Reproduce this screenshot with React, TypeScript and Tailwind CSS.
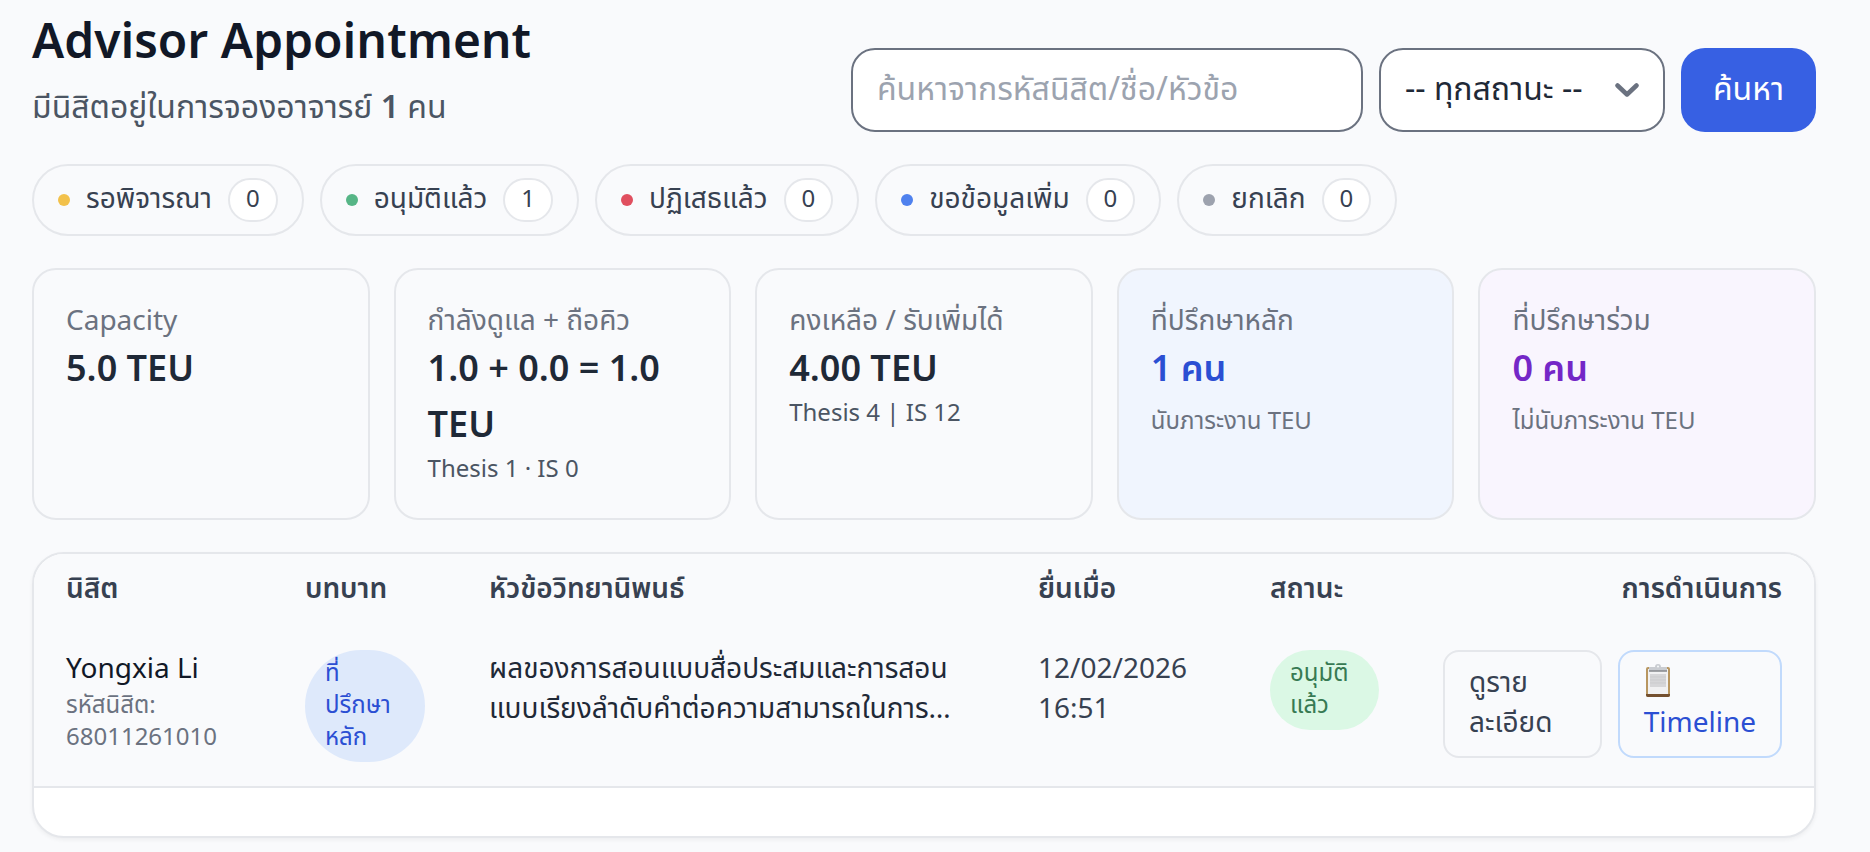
import React from 'react';

const statuses = [
    { label: 'รอพิจารณา', count: 0, dot: 'bg-[#f2c14b]' },
    { label: 'อนุมัติแล้ว', count: 1, dot: 'bg-[#56b586]' },
    { label: 'ปฏิเสธแล้ว', count: 0, dot: 'bg-[#e04f5f]' },
    { label: 'ขอข้อมูลเพิ่ม', count: 0, dot: 'bg-[#4f81ee]' },
    { label: 'ยกเลิก', count: 0, dot: 'bg-[#9da2ae]' },
];

const ClipboardIcon: React.FC = () => (
    <svg viewBox="0 0 28 34" className="w-7 h-[34px]" aria-hidden="true">
        <rect x="2" y="3" width="24" height="30" rx="2" fill="#b89660" />
        <path d="M2 30h24v1a2 2 0 0 1-2 2H4a2 2 0 0 1-2-2z" fill="#74502f" />
        <rect x="4" y="5" width="20" height="25" fill="#f1f1f2" />
        <rect x="6" y="10" width="16" height="13" fill="#d6d6d8" />
        <path d="M6 13h16M6 16h16M6 19h16" stroke="#cbcbcd" strokeWidth="1" />
        <path d="M5 7V3h6c0-2 1-3 3-3s3 1 3 3h6v4z" fill="#c9ccd1" />
        <path d="M5 7h18" stroke="#85878b" strokeWidth="1.5" />
        <circle cx="14" cy="2.5" r="1" fill="#f9fafc" />
    </svg>
);

interface StatCardProps {
    label: string;
    value: string;
    note?: string;
    className?: string;
    valueClass?: string;
    noteClass?: string;
}

const StatCard: React.FC<StatCardProps> = ({
    label,
    value,
    note,
    className = '',
    valueClass = 'text-[#1f2937]',
    noteClass = 'text-[#4b5563]',
}) => {
    return (
        <div className={`rounded-3xl border-2 border-[#e5e7eb] p-8 ${className}`}>
            <p className="text-[28px] leading-10 text-[#6b7280]">{label}</p>
            <p className={`text-4xl leading-14 font-semibold ${valueClass}`}>{value}</p>
            {note && <p className={`text-2xl leading-8 ${noteClass}`}>{note}</p>}
        </div>
    );
};

const App: React.FC = () => {
    return (
        <div className="min-h-screen bg-[#f9fafc] pl-8 pr-[54px] pt-3 pb-3 font-['Noto_Sans_Thai','Noto_Sans',sans-serif] text-[#1f2937]">
            <header className="flex items-end justify-between gap-4">
                <div>
                    <h1 className="text-5xl leading-16 font-semibold text-[#111827]">Advisor Appointment</h1>
                    <p className="mt-2 text-[32px] leading-12 text-[#4b5563]">
                        มีนิสิตอยู่ในการจองอาจารย์ <span className="font-semibold">1</span> คน
                    </p>
                </div>
                <form className="flex gap-4" onSubmit={(e) => e.preventDefault()}>
                    <input
                        type="text"
                        aria-label="ค้นหา"
                        placeholder="ค้นหาจากรหัสนิสิต/ชื่อ/หัวข้อ"
                        className="w-lg h-21 rounded-3xl border-2 border-[#6b7280] bg-white px-6 text-[32px] leading-12 placeholder:text-[#9ca3af]"
                    />
                    <div className="relative">
                        <select
                            aria-label="สถานะ"
                            className="h-21 w-[286px] appearance-none rounded-3xl border-2 border-[#6b7280] bg-white pl-6 pr-20 text-[32px] leading-12"
                        >
                            <option>-- ทุกสถานะ --</option>
                        </select>
                        <svg
                            viewBox="0 0 24 14"
                            className="pointer-events-none absolute right-[26px] top-[35px] h-[14px] w-6"
                            fill="none"
                            stroke="#6b7280"
                            strokeWidth="4.5"
                            strokeLinecap="round"
                            strokeLinejoin="round"
                        >
                            <path d="M2.5 2.5 12 11.5 21.5 2.5" />
                        </svg>
                    </div>
                    <button type="submit" className="h-21 rounded-3xl bg-[#3760e3] px-8 text-[32px] leading-12 text-white">
                        ค้นหา
                    </button>
                </form>
            </header>

            <div className="mt-8 flex flex-wrap gap-4">
                {statuses.map((s) => (
                    <div
                        key={s.label}
                        className="flex items-center gap-4 rounded-full border-2 border-[#e5e7eb] px-6 py-3 text-[28px] leading-10 text-[#374151]"
                    >
                        <span className={`size-3 rounded-full ${s.dot}`} />
                        <span>{s.label}</span>
                        <span className="rounded-full border-2 border-[#e5e7eb] bg-white px-4 py-1 text-2xl leading-8">
                            {s.count}
                        </span>
                    </div>
                ))}
            </div>

            <div className="mt-8 grid grid-cols-5 gap-6">
                <StatCard label="Capacity" value="5.0 TEU" />
                <StatCard label="กำลังดูแล + ถือคิว" value="1.0 + 0.0 = 1.0 TEU" note="Thesis 1 · IS 0" />
                <StatCard label="คงเหลือ / รับเพิ่มได้" value="4.00 TEU" note="Thesis 4 | IS 12" />
                <StatCard
                    label="ที่ปรึกษาหลัก"
                    value="1 คน"
                    note="นับภาระงาน TEU"
                    className="bg-[#f0f5fe]"
                    valueClass="text-[#2b4fd3]"
                    noteClass="mt-2 text-[#6b7280]"
                />
                <StatCard
                    label="ที่ปรึกษาร่วม"
                    value="0 คน"
                    note="ไม่นับภาระงาน TEU"
                    className="bg-[#f9f5fe]"
                    valueClass="text-[#7427c7]"
                    noteClass="mt-2 text-[#6b7280]"
                />
            </div>

            <div className="mt-8 overflow-hidden rounded-4xl border-2 border-[#e5e7eb] bg-white pb-12 shadow-[0_2px_4px_rgb(0_0_0/0.05)]">
                <table className="w-full table-fixed text-left text-[28px] leading-10">
                    <colgroup>
                        <col className="w-[239px]" />
                        <col className="w-[184px]" />
                        <col />
                        <col className="w-[232px]" />
                        <col className="w-[173px]" />
                        <col className="w-[403px]" />
                    </colgroup>
                    <thead className="bg-[#f9fafc] text-[#374151]">
                        <tr>
                            <th className="px-8 py-4 font-semibold">นิสิต</th>
                            <th className="px-8 py-4 font-semibold">บทบาท</th>
                            <th className="px-8 py-4 font-semibold">หัวข้อวิทยานิพนธ์</th>
                            <th className="px-8 py-4 font-semibold">ยื่นเมื่อ</th>
                            <th className="px-8 py-4 font-semibold">สถานะ</th>
                            <th className="px-8 py-4 text-right font-semibold">การดำเนินการ</th>
                        </tr>
                    </thead>
                    <tbody>
                        <tr className="border-b-2 border-[#e5e7eb] bg-[#f9fafc] align-top">
                            <td className="px-8 py-6">
                                <div className="text-[#111827]">Yongxia Li</div>
                                <div className="text-2xl leading-8 text-[#6b7280]">รหัสนิสิต: 68011261010</div>
                            </td>
                            <td className="px-8 py-6">
                                <div className="rounded-full bg-[#dee9fb] px-5 py-2 text-2xl leading-8 text-[#2b4fd3]">
                                    ที่
                                    <br />
                                    ปรึกษา
                                    <br />
                                    หลัก
                                </div>
                            </td>
                            <td className="px-8 py-6">
                                ผลของการสอนแบบสื่อประสมและการสอน
                                <br />
                                แบบเรียงลำดับคำต่อความสามารถในการ…
                            </td>
                            <td className="px-8 py-6 text-[#374151]">12/02/2026 16:51</td>
                            <td className="px-8 py-6">
                                <div className="rounded-full bg-[#dbf8e5] px-5 py-2 text-2xl leading-8 text-[#377a53]">
                                    อนุมัติ
                                    <br />
                                    แล้ว
                                </div>
                            </td>
                            <td className="px-8 py-6">
                                <div className="flex justify-end gap-4">
                                    <button className="flex-1 rounded-2xl border-2 border-[#e5e7eb] px-6 py-3 text-left text-[#374151]">
                                        ดูราย
                                        <br />
                                        ละเอียด
                                    </button>
                                    <button className="rounded-2xl border-2 border-[#c1dafc] px-6 py-3 text-left text-[#2b4fd3]">
                                        <span className="flex h-10 items-start">
                                            <ClipboardIcon />
                                        </span>
                                        Timeline
                                    </button>
                                </div>
                            </td>
                        </tr>
                    </tbody>
                </table>
            </div>
        </div>
    );
};

export default App;
